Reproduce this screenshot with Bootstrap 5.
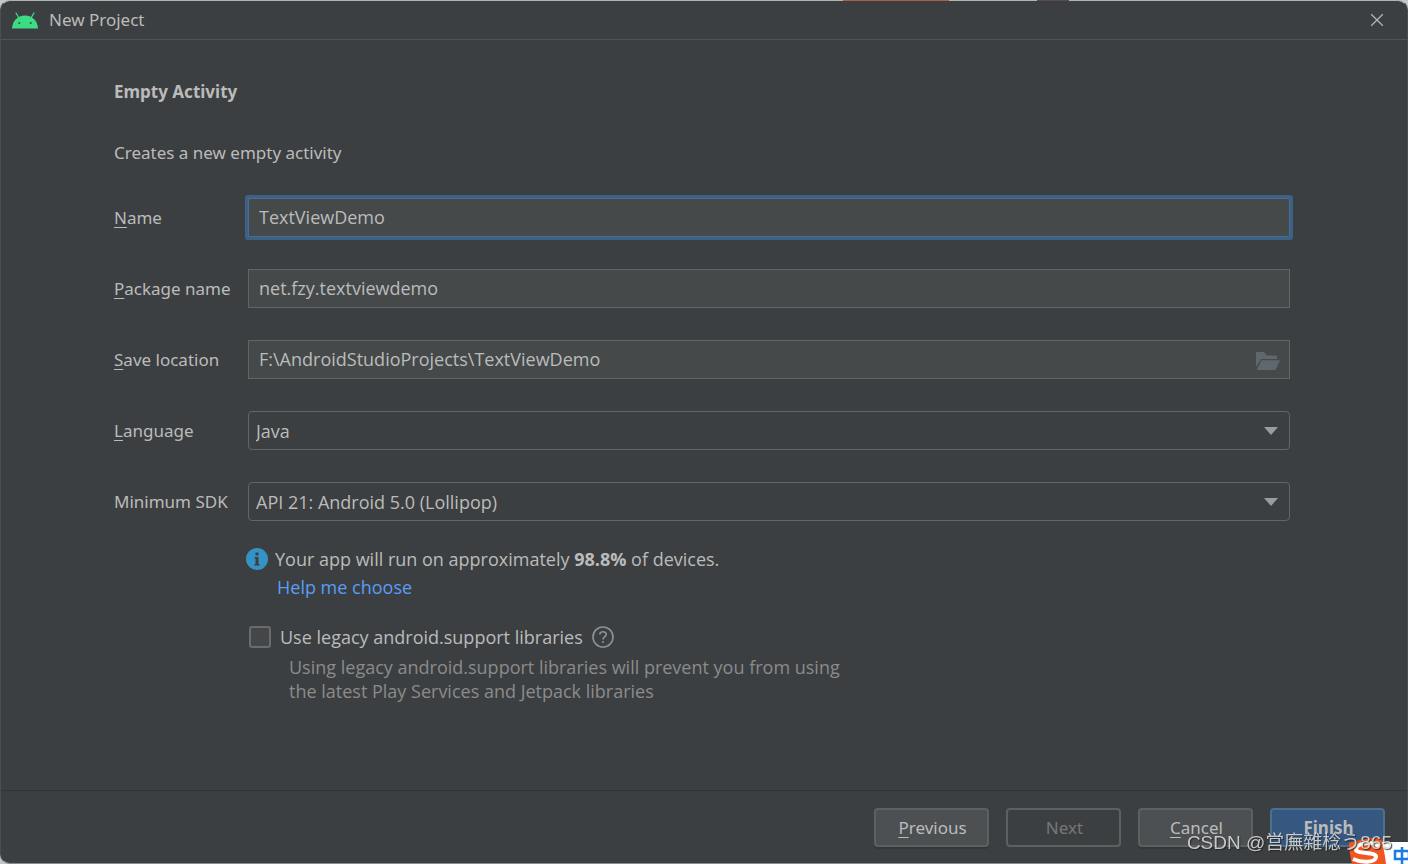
<!DOCTYPE html>
<html lang="en" data-bs-theme="dark">
<head>
<meta charset="utf-8">
<meta name="viewport" content="width=device-width, initial-scale=1">
<title>New Project</title>
<link href="https://cdn.jsdelivr.net/npm/bootstrap@5.3.0/dist/css/bootstrap.min.css" rel="stylesheet">
<style>
  :root { --panel: #3c3f41; --ink: #bbbbbb; --line: #646464; --field: #45494a; }
  body { font: 18px/24px "Open Sans", "Noto Sans CJK SC", sans-serif; color: var(--ink); background: #c4c6c6; }
  .window { background: var(--panel); border: 1px solid #4b4e50; border-top-color: #b0b5b4; border-bottom-color: #8c8c8c; border-radius: 10px; overflow: hidden; }
  .backdrop-strip { top: 0; left: 0; right: 0; height: 1px; background: linear-gradient(90deg, transparent 843px, #b55b45 843px 949px, transparent 949px 1037px, #574b50 1037px 1069px, transparent 1069px); }
  .title-bar { height: 39px; padding: 0 22px 0 11px; border-bottom: 1px solid #515456; gap: 11px; }
  .title-bar h1, .wizard h2, .intro, .row-label, .foot .btn { font-family: "Noto Sans", sans-serif; font-size: 17px; line-height: 24px; color: var(--ink); }
  .close-btn { width: 16px; height: 24px; color: #b4b4b4; }
  .wizard { padding: 40px 117px 40px 113px; }
  .wizard h2 { margin-bottom: 37px; }
  .intro { margin-bottom: 33px; }
  .rows { gap: 32px; }
  .row-label { width: 134px; }
  .row-label u, .btn u { text-underline-offset: 3px; text-decoration-thickness: 1px; }
  .field, .field:focus { height: 39px; padding: 0 10px 2px; font-size: 18px; line-height: 24px; color: var(--ink); background-color: var(--field); border: 1px solid var(--line); border-radius: 0; box-shadow: none; }
  .field.active-field { border-color: #466d94; box-shadow: 0 0 0 3px #3d6185; border-radius: 1px; }
  select.field { padding: 0 32px 0 7px; background-color: var(--panel); border-radius: 4px;
    background-image: url("data:image/svg+xml,%3Csvg xmlns='http://www.w3.org/2000/svg' viewBox='0 0 14 8'%3E%3Cpath d='M0 0h14L7 8z' fill='%239a9da0'/%3E%3C/svg%3E"); background-size: 14px 8px; background-position: right 11px center; }
  .browse { right: 10px; top: 9px; width: 24px; height: 24px; color: #5f686c; }
  .extras { margin: 26px 0 0 132px; }
  .note { gap: 7px; }
  .help-link { color: #589df6; margin: 4px 0 0 31px; }
  .legacy { margin: 26px 0 0 3px; gap: 9px; }
  .legacy .form-check-input { width: 22px; height: 22px; border: 2px solid #6b6b6b; border-radius: 3px; background-color: #43474a; }
  .legacy-hint { margin: 6px 0 0 43px; max-width: 570px; color: #8b8b8b; }
  .foot { height: 73px; padding: 17px 22px 0; border-top: 1px solid #323435; gap: 17px; }
  .foot .btn { width: 115px; height: 39px; padding: 0 0 0 2px; border: 2px solid #5e6060; border-radius: 4px; background: #4c5052; box-shadow: 0 2px 0 #35383a; }
  .foot .btn:disabled { color: #777; background: transparent; box-shadow: none; opacity: 1; }
  .foot .btn-finish { border-color: #4c708c; background: #365880; font-weight: 700; }
  .ime { right: 0; bottom: 0; }
  .stamp { right: 16px; bottom: 7px; font: 19px/28px "Liberation Sans", "Noto Sans CJK SC", sans-serif; color: #dedede; text-shadow: 1px 1px 1px #222; opacity: .85; pointer-events: none; }
</style>
</head>
<body>
<div class="window d-flex flex-column min-vh-100">
  <header class="title-bar d-flex align-items-center">
    <svg width="26" height="17" viewBox="0 0 26 17" aria-hidden="true">
      <path d="M0 16.500C.4 9 5.500 3.500 13 3.500S25.600 9 26 16.500z" fill="#3ddc84"/>
      <path d="M7 6 4 1M19 6l3-5" stroke="#3ddc84" stroke-width="1.300" stroke-linecap="round"/>
      <circle cx="7.300" cy="11" r="1.100" fill="#28633f"/><circle cx="18.700" cy="11" r="1.100" fill="#28633f"/>
    </svg>
    <h1 class="mb-0 fw-normal flex-grow-1">New Project</h1>
    <button type="button" class="close-btn btn p-0 border-0 d-flex align-items-center justify-content-center" aria-label="Close">
      <svg width="12" height="12" viewBox="0 0 12 12"><path d="M0 0 12 12M12 0 0 12" stroke="currentColor" stroke-width="1.300"/></svg>
    </button>
  </header>

  <main class="wizard flex-grow-1">
    <h2 class="fw-bold">Empty Activity</h2>
    <p class="intro">Creates a new empty activity</p>
    <form id="project">
      <div class="rows d-flex flex-column">
        <div class="d-flex align-items-center">
          <label class="row-label flex-shrink-0" for="name"><u>N</u>ame</label>
          <input id="name" class="field active-field form-control" type="text" value="TextViewDemo">
        </div>
        <div class="d-flex align-items-center">
          <label class="row-label flex-shrink-0" for="package"><u>P</u>ackage name</label>
          <input id="package" class="field form-control" type="text" value="net.fzy.textviewdemo" spellcheck="false">
        </div>
        <div class="d-flex align-items-center">
          <label class="row-label flex-shrink-0" for="location"><u>S</u>ave location</label>
          <div class="position-relative flex-grow-1">
            <input id="location" class="field form-control" type="text" value="F:\AndroidStudioProjects\TextViewDemo" spellcheck="false">
            <button type="button" class="browse btn p-0 border-0 position-absolute d-flex align-items-center" aria-label="Browse">
              <svg width="24" height="18" viewBox="0 0 24 18" fill="currentColor"><path d="M0 0h8l2.500 3.500H21V7H5L0 15z"/><path d="M5.500 8.200H24L19.500 18H.6z"/></svg>
            </button>
          </div>
        </div>
        <div class="d-flex align-items-center">
          <label class="row-label flex-shrink-0" for="language"><u>L</u>anguage</label>
          <select id="language" class="field form-select"><option>Java</option><option>Kotlin</option></select>
        </div>
        <div class="d-flex align-items-center">
          <label class="row-label flex-shrink-0" for="sdk">Minimum SDK</label>
          <select id="sdk" class="field form-select"><option>API 21: Android 5.0 (Lollipop)</option></select>
        </div>
      </div>
      <div class="extras">
        <div class="note d-flex align-items-center">
          <svg width="22" height="22" viewBox="0 0 22 22" aria-hidden="true"><circle cx="11" cy="11" r="11" fill="#3592c4"/><path d="M9.500 4.500h3v3h-3zM8.500 9h4v7h1v1.500h-5V16h1v-5.500h-1z" fill="#3c3f41"/></svg>
          <span>Your app will run on approximately <strong>98.8%</strong> of devices.</span>
        </div>
        <a class="help-link d-inline-block text-decoration-none" href="#help">Help me choose</a>
        <div class="legacy d-flex align-items-center">
          <input id="legacy" class="form-check-input m-0 flex-shrink-0" type="checkbox">
          <label for="legacy">Use legacy android.support libraries</label>
          <svg width="22" height="22" viewBox="0 0 22 22" fill="none" stroke="#8b9296" stroke-width="1.600" role="img" aria-label="Help"><circle cx="11" cy="11" r="10"/><path d="M7.800 8.600C7.800 4.800 14.200 4.800 14.200 8.600 14.200 11 11 10.900 11 13.500M11 15v2"/></svg>
        </div>
        <p class="legacy-hint mb-0">Using legacy android.support libraries will prevent you from using the latest Play Services and Jetpack libraries</p>
      </div>
    </form>
  </main>

  <footer class="foot d-flex justify-content-end">
    <button type="button" class="btn"><u>P</u>revious</button>
    <button type="button" class="btn" disabled>Next</button>
    <button type="button" class="btn"><u>C</u>ancel</button>
    <button type="submit" form="project" class="btn btn-finish">Finish</button>
  </footer>
</div>

<div class="backdrop-strip position-absolute"></div>
<svg class="ime position-fixed" width="60" height="28" viewBox="0 0 60 28" aria-hidden="true">
  <path d="M34 6h26v22H34z" fill="#fff"/>
  <path d="M1 7C11 4 24 1 33 2c2 7 4 17 5 26H4C2 20 1 13 1 7z" fill="#f0561f"/>
  <path d="M31 10C24 5 9 7 8 13c-1 6 21 2 20 8-1 6-14 6-23 2" fill="none" stroke="#fff" stroke-width="4"/>
  <path d="M47 15h14v8H47zM54 11v17" fill="none" stroke="#1a7be0" stroke-width="2.500"/>
</svg>
<div class="stamp position-fixed text-nowrap">CSDN @営廡雜棯う865</div>
<script src="https://cdn.jsdelivr.net/npm/bootstrap@5.3.0/dist/js/bootstrap.bundle.min.js"></script>
</body>
</html>
